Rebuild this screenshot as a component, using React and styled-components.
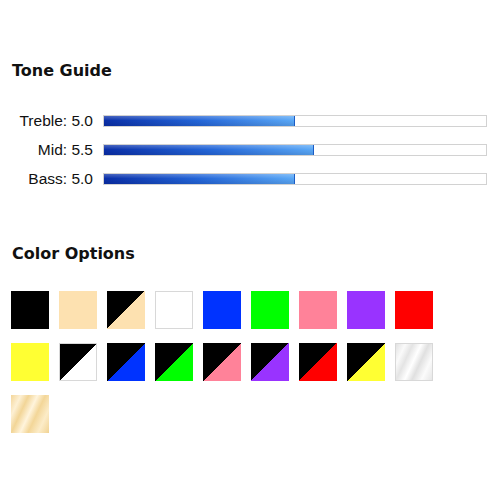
import styled, { createGlobalStyle } from 'styled-components';

const GlobalStyle = createGlobalStyle`
  body {
    margin: 0;
    background: #fff;
    font-family: "Liberation Sans", Arial, sans-serif;
    color: #000;
  }
`;

const Page = styled.div`
  padding: 61px 13px 0 12px;
  width: 500px;
  box-sizing: border-box;
`;

const Heading = styled.h2`
  margin: 0;
  font-family: "DejaVu Sans", Verdana, sans-serif;
  font-size: 16px;
  line-height: 20px;
  font-weight: bold;
  color: #111;
`;

const ToneList = styled.div`
  display: grid;
  grid-template-columns: 81px 1fr;
  column-gap: 10px;
  row-gap: 11px;
  margin: 31px 0 56px;
`;

const Label = styled.div`
  font-size: 15.5px;
  line-height: 18px;
  text-align: right;
  color: #111;
`;

const Track = styled.div`
  align-self: center;
  height: 12px;
  box-sizing: border-box;
  border: 1px solid #d2d2d2;
  background: #fff;
`;

const Fill = styled.div`
  height: 100%;
  box-sizing: border-box;
  border-right: 1px solid #1c5cc4;
  background:
    linear-gradient(to bottom, rgba(255, 255, 255, 0.25), rgba(255, 255, 255, 0) 45%, rgba(0, 0, 40, 0.12)),
    linear-gradient(to right, #0a2fa8, #2466d8 50%, #5aa8f6);
`;

const Swatches = styled.div`
  display: grid;
  grid-template-columns: repeat(9, 38px);
  column-gap: 10px;
  row-gap: 14px;
  margin: 27px 0 0 -1px;
`;

const Swatch = styled.div`
  width: 38px;
  height: 38px;
  box-sizing: border-box;
  background: ${({ $bg }) => $bg};
  border: ${({ $outline }) => ($outline ? '1px solid #d8d8d8' : 'none')};
`;

const split = c => `linear-gradient(to bottom right, #000 0 50%, ${c} 50% 100%)`;

const tones = [
  { name: 'Treble', value: 5.0 },
  { name: 'Mid', value: 5.5 },
  { name: 'Bass', value: 5.0 },
];

const colors = [
  { bg: '#000' },
  { bg: '#fde1b0' },
  { bg: split('#fde1b0') },
  { bg: '#fff', outline: true },
  { bg: '#0033ff' },
  { bg: '#00ff00' },
  { bg: '#ff8299' },
  { bg: '#9933ff' },
  { bg: '#ff0000' },
  { bg: '#ffff33' },
  { bg: split('#fff'), outline: true },
  { bg: split('#0033ff') },
  { bg: split('#00ff00') },
  { bg: split('#ff8299') },
  { bg: split('#9933ff') },
  { bg: split('#ff0000') },
  { bg: split('#ffff33') },
  {
    bg: 'linear-gradient(115deg, #e2e2e2 0%, #fafafa 18%, #e4e4e4 32%, #ffffff 48%, #e0e0e0 62%, #fbfbfb 80%, #e6e6e6 100%)',
    outline: true,
  },
  {
    bg: 'linear-gradient(115deg, #f4d69a 0%, #fdf0d4 18%, #f2d597 32%, #fff4dc 48%, #f3d698 62%, #fcecc8 80%, #f1d393 100%)',
  },
];

export default function App() {
  return (
    <>
      <GlobalStyle />
      <Page>
        <Heading>Tone Guide</Heading>
        <ToneList>
          {tones.map(t => (
            <>
              <Label key={t.name}>
                {t.name}: {t.value.toFixed(1)}
              </Label>
              <Track key={t.name + '-bar'}>
                <Fill style={{ width: `${t.value * 10}%` }} />
              </Track>
            </>
          ))}
        </ToneList>
        <Heading>Color Options</Heading>
        <Swatches>
          {colors.map((c, i) => (
            <Swatch key={i} $bg={c.bg} $outline={c.outline} />
          ))}
        </Swatches>
      </Page>
    </>
  );
}
